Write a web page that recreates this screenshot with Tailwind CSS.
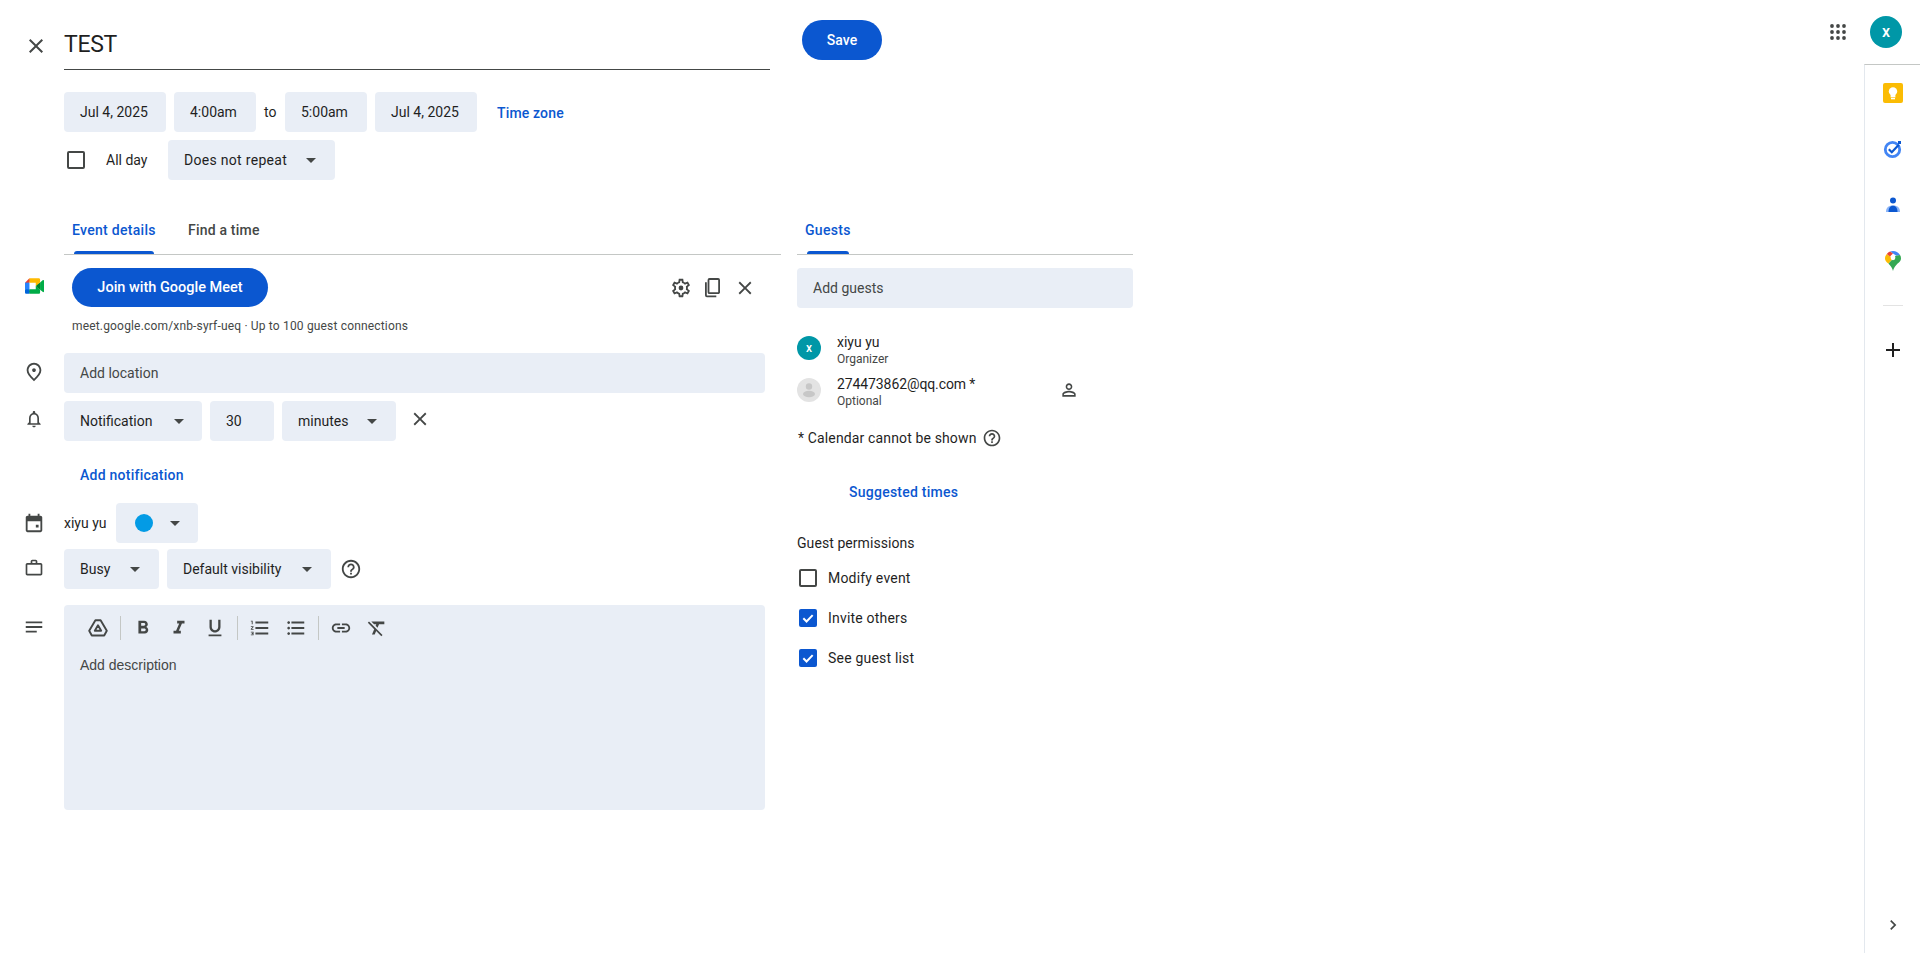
<!DOCTYPE html>
<html lang="en">
	<head>
		<meta charset="UTF-8" />
		<title>TEST - Google Calendar</title>
		<script src="https://cdn.jsdelivr.net/npm/@tailwindcss/browser@4"></script>
	</head>
	<body class="bg-white font-[family-name:Roboto,sans-serif] text-sm text-[#1f1f1f]">
		<div class="flex h-[953px] w-[1920px] overflow-hidden">
			<main class="w-[1808px]">
				<!-- title row -->
				<div class="flex pt-5">
					<div class="flex h-[50px] w-16 items-center justify-start pt-0.5 pl-6">
						<svg class="size-6 text-[#444746]" viewBox="0 0 24 24" fill="currentColor"><path d="M19 6.41L17.59 5 12 10.59 6.41 5 5 6.41 10.59 12 5 17.59 6.41 19 12 13.41 17.59 19 19 17.59 13.41 12z" /></svg>
					</div>
					<div class="flex h-[50px] w-[706px] items-center border-b border-[#444746] pb-px text-[23px] leading-none tracking-[-0.3px]">TEST</div>
					<button class="ml-8 h-10 w-20 rounded-full bg-[#0b57d0] text-sm font-medium text-white">Save</button>
				</div>

				<!-- date row -->
				<div class="mt-[22px] ml-16 flex h-10 items-center gap-2">
					<div class="flex h-10 w-[102px] items-center rounded bg-[#e9eef6] px-4">Jul 4, 2025</div>
					<div class="flex h-10 w-[82px] items-center rounded bg-[#e9eef6] px-4">4:00am</div>
					<span class="w-[13px]">to</span>
					<div class="flex h-10 w-[82px] items-center rounded bg-[#e9eef6] px-4">5:00am</div>
					<div class="flex h-10 w-[102px] items-center rounded bg-[#e9eef6] px-4">Jul 4, 2025</div>
					<a class="ml-3 pt-0.5 font-medium tracking-[0.15px] text-[#0b57d0]">Time zone</a>
				</div>
				<div class="mt-2 ml-16 flex h-10 items-center">
					<span class="ml-[3px] size-[18px] rounded-[2px] border-2 border-[#444746]"></span>
					<span class="ml-[21px] w-[62px]">All day</span>
					<div class="flex h-10 w-[167px] items-center justify-between rounded bg-[#e9eef6] pr-[19px] pl-4 tracking-[0.3px]">
						Does not repeat
						<span class="h-0 w-0 border-x-[5px] border-t-[5px] border-x-transparent border-t-[#444746]"></span>
					</div>
				</div>

				<div class="mt-[26px] flex">
					<!-- event details column -->
					<section class="w-[781px]">
						<div class="ml-16 flex h-[49px] border-b border-[#c4c7c5]">
							<div class="relative ml-2 w-[116px] pt-[14px] font-medium tracking-[0.3px] text-[#0b57d0]">
								Event details
								<span class="absolute bottom-0 left-[2px] h-[3px] w-20 rounded-t-[3px] bg-[#0b57d0]"></span>
							</div>
							<div class="pt-[14px] font-medium tracking-[0.2px] text-[#444746]">Find a time</div>
						</div>

						<div class="mt-[13px] flex h-[77px]">
							<div class="w-16 pt-[10px] pl-[25px]">
								<svg class="h-4 w-[19px]" viewBox="0 0 87.5 72">
									<path fill="#00832d" d="M49.5 36l8.53 9.75 11.47 7.33 2-17.02-2-16.64-11.69 6.44z" />
									<path fill="#0066da" d="M0 51.5V66c0 3.315 2.685 6 6 6h14.5l3-10.96-3-9.54-9.95-3z" />
									<path fill="#e94235" d="M20.5 0L0 20.5l10.55 3 9.95-3 2.95-9.41z" />
									<path fill="#2684fc" d="M20.5 20.5H0v31h20.5z" />
									<path fill="#00ac47" d="M82.6 8.68L69.5 19.42v33.66l13.16 10.79c1.97 1.54 4.85.135 4.85-2.37V11c0-2.535-2.945-3.925-4.91-2.32zM49.5 36v15.5h-29V72h43c3.315 0 6-2.685 6-6V53.08z" />
									<path fill="#ffba00" d="M63.5 0h-43v20.5h29V36l20-16.57V6c0-3.315-2.685-6-6-6z" />
								</svg>
							</div>
							<div class="w-[701px] pl-2">
								<div class="flex items-center">
									<button class="h-[39px] w-[196px] rounded-full bg-[#0b57d0] pt-px text-[14.5px] font-medium text-white">Join with Google Meet</button>
									<svg class="ml-auto size-[22px] text-[#444746]" viewBox="0 0 24 24" fill="currentColor"><path d="M19.43 12.98c.04-.32.07-.64.07-.98 0-.34-.03-.66-.07-.98l2.11-1.65c.19-.15.24-.42.12-.64l-2-3.46c-.09-.16-.26-.25-.44-.25-.06 0-.12.01-.17.03l-2.49 1c-.52-.4-1.08-.73-1.69-.98l-.38-2.65C14.46 2.18 14.25 2 14 2h-4c-.25 0-.46.18-.49.42l-.38 2.65c-.61.25-1.17.59-1.69.98l-2.49-1c-.06-.02-.12-.03-.18-.03-.17 0-.34.09-.43.25l-2 3.46c-.13.22-.07.49.12.64l2.11 1.65c-.04.32-.07.65-.07.98 0 .33.03.66.07.98l-2.11 1.65c-.19.15-.24.42-.12.64l2 3.46c.09.16.26.25.44.25.06 0 .12-.01.17-.03l2.49-1c.52.4 1.08.73 1.69.98l.38 2.65c.03.24.24.42.49.42h4c.25 0 .46-.18.49-.42l.38-2.65c.61-.25 1.17-.59 1.69-.98l2.49 1c.06.02.12.03.18.03.17 0 .34-.09.43-.25l2-3.46c.12-.22.07-.49-.12-.64l-2.11-1.65zm-1.98-1.71c.04.31.05.52.05.73 0 .21-.02.43-.05.73l-.14 1.13.89.7 1.08.84-.7 1.21-1.27-.51-1.04-.42-.9.68c-.43.32-.84.56-1.25.73l-1.06.43-.16 1.13-.2 1.35h-1.4l-.19-1.35-.16-1.13-1.06-.43c-.43-.18-.83-.41-1.23-.71l-.91-.7-1.06.43-1.27.51-.7-1.21 1.08-.84.89-.7-.14-1.13c-.03-.31-.05-.54-.05-.74s.02-.43.05-.73l.14-1.13-.89-.7-1.08-.84.7-1.21 1.27.51 1.04.42.9-.68c.43-.32.84-.56 1.25-.73l1.06-.43.16-1.13.2-1.35h1.39l.19 1.35.16 1.13 1.06.43c.43.18.83.41 1.23.71l.91.7 1.06-.43 1.27-.51.7 1.21-1.07.85-.89.7.14 1.13z" /><circle cx="12" cy="12" r="2.6" /></svg>
									<svg class="ml-[10px] size-[22px] text-[#444746]" viewBox="0 0 22 22" fill="none" stroke="currentColor" stroke-width="1.8"><path d="M7.5 2h8.6a1 1 0 0 1 1 1v12.2a1 1 0 0 1-1 1H7.5a1 1 0 0 1-1-1V3a1 1 0 0 1 1-1z" /><path d="M3.9 5.2v13.1a1 1 0 0 0 1 1h9.4" /></svg>
									<svg class="mr-[9px] ml-[10px] size-[22px] text-[#444746]" viewBox="0 0 24 24" fill="currentColor"><path d="M19 6.41L17.59 5 12 10.59 6.41 5 5 6.41 10.59 12 5 17.59 6.41 19 12 13.41 17.59 19 19 17.59 13.41 12z" /></svg>
								</div>
								<p class="mt-[11px] text-xs leading-4 tracking-[0.17px] text-[#444746]">meet.google.com/xnb-syrf-ueq · Up to 100 guest connections</p>
							</div>
						</div>

						<div class="mt-2 flex h-10 items-center">
							<div class="flex w-16 pb-0.5 pl-[23px]">
								<svg class="size-[22px] text-[#444746]" viewBox="0 0 24 24" fill="currentColor"><path d="M12 12c-1.1 0-2-.9-2-2s.9-2 2-2 2 .9 2 2-.9 2-2 2zm6-1.8C18 6.57 15.35 4 12 4s-6 2.57-6 6.2c0 2.34 1.95 5.44 6 9.14 4.05-3.7 6-6.8 6-9.14zM12 2c4.2 0 8 3.22 8 8.2 0 3.32-2.67 7.25-8 11.8-5.33-4.55-8-8.48-8-11.8C4 5.22 7.8 2 12 2z" /></svg>
							</div>
							<div class="flex h-10 w-[701px] items-center rounded bg-[#e9eef6] px-4 text-[#444746]">Add location</div>
						</div>

						<div class="mt-2 flex h-10 items-center">
							<div class="flex w-16 pb-1 pl-6">
								<svg class="size-5 text-[#444746]" viewBox="0 0 24 24" fill="currentColor"><path d="M12 22c1.1 0 2-.9 2-2h-4c0 1.1.9 2 2 2zm6-6v-5c0-3.07-1.63-5.64-4.5-6.32V4c0-.83-.67-1.5-1.5-1.5s-1.5.67-1.5 1.5v.68C7.64 5.36 6 7.92 6 11v5l-2 2v1h16v-1l-2-2zm-2 1H8v-6c0-2.48 1.51-4.5 4-4.5s4 2.02 4 4.5v6z" /></svg>
							</div>
							<div class="flex h-10 w-[138px] items-center justify-between rounded bg-[#e9eef6] pr-[18px] pl-4">
								Notification
								<span class="h-0 w-0 border-x-[5px] border-t-[5px] border-x-transparent border-t-[#444746]"></span>
							</div>
							<div class="ml-2 flex h-10 w-16 items-center rounded bg-[#e9eef6] px-4">30</div>
							<div class="ml-2 flex h-10 w-[114px] items-center justify-between rounded bg-[#e9eef6] pr-[19px] pl-4">
								minutes
								<span class="h-0 w-0 border-x-[5px] border-t-[5px] border-x-transparent border-t-[#444746]"></span>
							</div>
							<svg class="mb-1 ml-[13px] size-[22px] text-[#444746]" viewBox="0 0 24 24" fill="currentColor"><path d="M19 6.41L17.59 5 12 10.59 6.41 5 5 6.41 10.59 12 5 17.59 6.41 19 12 13.41 17.59 19 19 17.59 13.41 12z" /></svg>
						</div>

						<div class="flex h-[62px] items-center pt-1.5 pl-20 font-medium tracking-[0.25px] text-[#0b57d0]">Add notification</div>

						<div class="flex h-10 items-center">
							<div class="flex w-16 pl-[23px]">
								<svg class="size-[22px] text-[#444746]" viewBox="0 0 24 24" fill="currentColor"><path d="M19 4h-1V2h-2v2H8V2H6v2H5c-1.11 0-2 .9-2 2v14c0 1.1.89 2 2 2h14c1.1 0 2-.9 2-2V6c0-1.1-.9-2-2-2zm0 16H5V10h14v10zm-2-6h-3v3h3v-3z" /></svg>
							</div>
							<span class="w-[52px]">xiyu yu</span>
							<div class="flex h-10 w-[82px] items-center rounded bg-[#e9eef6] pl-[19px]">
								<span class="size-[18px] rounded-full bg-[#039be5]"></span>
								<span class="ml-[17px] h-0 w-0 border-x-[5px] border-t-[5px] border-x-transparent border-t-[#444746]"></span>
							</div>
						</div>

						<div class="mt-1.5 flex h-10 items-center">
							<div class="flex w-16 pb-0.5 pl-6">
								<svg class="size-5 text-[#444746]" viewBox="0 0 24 24" fill="currentColor"><path d="M14 6V4h-4v2h4zM4 8v11h16V8H4zm16-2c1.11 0 2 .89 2 2v11c0 1.11-.89 2-2 2H4c-1.11 0-2-.89-2-2l.01-11c0-1.11.88-2 1.99-2h4V4c0-1.11.89-2 2-2h4c1.11 0 2 .89 2 2v2h4z" /></svg>
							</div>
							<div class="flex h-10 w-[95px] items-center justify-between rounded bg-[#e9eef6] pr-[19px] pl-4">
								Busy
								<span class="h-0 w-0 border-x-[5px] border-t-[5px] border-x-transparent border-t-[#444746]"></span>
							</div>
							<div class="ml-2 flex h-10 w-[164px] items-center justify-between rounded bg-[#e9eef6] pr-[19px] pl-4">
								Default visibility
								<span class="h-0 w-0 border-x-[5px] border-t-[5px] border-x-transparent border-t-[#444746]"></span>
							</div>
							<svg class="ml-[9px] size-[22px] text-[#444746]" viewBox="0 0 24 24" fill="currentColor"><path d="M11 18h2v-2h-2v2zm1-16C6.48 2 2 6.48 2 12s4.48 10 10 10 10-4.48 10-10S17.52 2 12 2zm0 18c-4.41 0-8-3.59-8-8s3.59-8 8-8 8 3.59 8 8-3.59 8-8 8zm0-14c-2.21 0-4 1.79-4 4h2c0-1.1.9-2 2-2s2 .9 2 2c0 2-3 1.75-3 5h2c0-2.25 3-2.5 3-5 0-2.21-1.79-4-4-4z" /></svg>
						</div>

						<div class="mt-4 flex">
							<div class="w-16 pt-[11px] pl-[23px]">
								<svg class="size-[22px] text-[#444746]" viewBox="0 0 24 24" fill="currentColor"><path d="M3 18h12v-2H3v2zM3 6v2h18V6H3zm0 7h18v-2H3v2z" /></svg>
							</div>
							<div class="h-[205px] w-[701px] rounded bg-[#e9eef6]">
								<div class="flex h-[46px] items-center pl-[23px] text-[#444746]">
									<svg class="size-[22px]" viewBox="0 0 22 22" fill="none" stroke="currentColor" stroke-width="1.9" stroke-linejoin="round"><path d="M8.4 3.2h5.2l6.2 10.6-2.6 4.7H4.8l-2.6-4.7z" /><path d="M11 8.2l3.2 5.6H7.8z" /></svg>
									<span class="ml-[11px] h-6 w-px bg-[#c4c7c5]"></span>
									<svg class="ml-[11px] size-[22px]" viewBox="0 0 24 24" fill="currentColor"><path d="M15.6 10.79c.97-.67 1.65-1.77 1.65-2.79 0-2.26-1.75-4-4-4H7v14h7.04c2.09 0 3.71-1.7 3.71-3.79 0-1.52-.86-2.82-2.15-3.42zM10 6.5h3c.83 0 1.5.67 1.5 1.5s-.67 1.5-1.5 1.5h-3v-3zm3.5 9H10v-3h3.5c.83 0 1.5.67 1.5 1.5s-.67 1.5-1.5 1.5z" /></svg>
									<svg class="ml-[14px] size-[22px]" viewBox="0 0 24 24" fill="currentColor"><path d="M10 4v3h2.21l-3.42 8H6v3h8v-3h-2.21l3.42-8H18V4z" /></svg>
									<svg class="ml-[14px] size-[22px]" viewBox="0 0 24 24" fill="currentColor"><path d="M12 17c3.31 0 6-2.69 6-6V3h-2.5v8c0 1.93-1.57 3.5-3.5 3.5S8.5 12.93 8.5 11V3H6v8c0 3.31 2.69 6 6 6zm-7 2v2h14v-2H5z" /></svg>
									<span class="ml-[11px] h-6 w-px bg-[#c4c7c5]"></span>
									<svg class="ml-[11px] size-[22px]" viewBox="0 0 24 24" fill="currentColor"><path d="M2 17h2v.5H3v1h1v.5H2v1h3v-4H2v1zm1-9h1V4H2v1h1v3zm-1 3h1.8L2 13.1v.9h3v-1H3.2L5 10.9V10H2v1zm5-6v2h14V5H7zm0 14h14v-2H7v2zm0-6h14v-2H7v2z" /></svg>
									<svg class="ml-[14px] size-[22px]" viewBox="0 0 24 24" fill="currentColor"><path d="M4 10.5c-.83 0-1.5.67-1.5 1.5s.67 1.5 1.5 1.5 1.5-.67 1.5-1.5-.67-1.5-1.5-1.5zm0-6c-.83 0-1.5.67-1.5 1.5S3.17 7.5 4 7.5 5.5 6.83 5.5 6 4.83 4.5 4 4.5zm0 12c-.83 0-1.5.68-1.5 1.5s.68 1.5 1.5 1.5 1.5-.68 1.5-1.5-.67-1.5-1.5-1.5zM7 19h14v-2H7v2zm0-6h14v-2H7v2zm0-8v2h14V5H7z" /></svg>
									<span class="ml-[11px] h-6 w-px bg-[#c4c7c5]"></span>
									<svg class="ml-[11px] size-[22px]" viewBox="0 0 24 24" fill="currentColor"><path d="M3.9 12c0-1.71 1.39-3.1 3.1-3.1h4V7H7c-2.76 0-5 2.24-5 5s2.24 5 5 5h4v-1.9H7c-1.71 0-3.1-1.39-3.1-3.1zM8 13h8v-2H8v2zm9-6h-4v1.9h4c1.71 0 3.1 1.39 3.1 3.1s-1.39 3.1-3.1 3.1h-4V17h4c2.76 0 5-2.24 5-5s-2.24-5-5-5z" /></svg>
									<svg class="ml-[14px] size-[22px]" viewBox="0 0 24 24" fill="currentColor"><path d="M3.27 5L2 6.27l6.97 6.97L6.5 19h3l1.57-3.66L16.73 21 18 19.73 3.55 5.27 3.27 5zM6 5v.18L8.82 8h2.4l-.72 1.68 2.1 2.1L14.21 8H20V5H6z" /></svg>
								</div>
								<p class="mt-1 pl-4 font-[family-name:'Liberation_Sans',sans-serif] leading-5 text-[#444746]">Add description</p>
							</div>
						</div>
					</section>

					<!-- guests column -->
					<section class="ml-4 w-[336px]">
						<div class="flex h-[49px] border-b border-[#c4c7c5]">
							<div class="relative ml-2 pt-[14px] font-medium tracking-[0.3px] text-[#0b57d0]">
								Guests
								<span class="absolute bottom-0 left-[2px] h-[3px] w-[42px] rounded-t-[3px] bg-[#0b57d0]"></span>
							</div>
						</div>
						<div class="mt-[13px] flex h-10 items-center rounded bg-[#e9eef6] px-4 text-[#444746]">Add guests</div>

						<div class="mt-6 flex h-[42px]">
							<span class="mt-1 flex size-6 items-center justify-center rounded-full bg-[#0097a7] text-xs font-medium text-white">x</span>
							<div class="ml-4">
								<p class="leading-5">xiyu yu</p>
								<p class="-mt-px text-xs leading-4 text-[#444746]">Organizer</p>
							</div>
						</div>
						<div class="flex h-[42px]">
							<span class="mt-1 size-6 overflow-hidden rounded-full bg-[#e3e3e3]">
								<svg class="size-6 text-[#c7c7c7]" viewBox="0 0 24 24" fill="currentColor"><circle cx="12" cy="8.5" r="3.2" /><ellipse cx="12" cy="16" rx="6" ry="3.2" /></svg>
							</span>
							<div class="ml-4">
								<p class="leading-5 tracking-[-0.1px]">274473862@qq.com *</p>
								<p class="-mt-px text-xs leading-4 text-[#444746]">Optional</p>
							</div>
							<svg class="mt-[6px] mr-[54px] ml-auto size-5 text-[#444746]" viewBox="0 0 24 24" fill="currentColor"><path d="M12 5.9c1.16 0 2.1.94 2.1 2.1s-.94 2.1-2.1 2.1S9.9 9.16 9.9 8s.94-2.1 2.1-2.1m0 9c2.97 0 6.1 1.46 6.1 2.1v1.1H5.9V17c0-.64 3.13-2.1 6.1-2.1M12 4C9.79 4 8 5.79 8 8s1.79 4 4 4 4-1.79 4-4-1.79-4-4-4zm0 9c-2.67 0-8 1.34-8 4v3h16v-3c0-2.66-5.33-4-8-4z" /></svg>
						</div>
						<div class="mt-3 flex h-5 items-center pl-px tracking-[0.14px]">
							* Calendar cannot be shown
							<svg class="ml-[5px] size-5 text-[#444746]" viewBox="0 0 24 24" fill="currentColor"><path d="M11 18h2v-2h-2v2zm1-16C6.48 2 2 6.48 2 12s4.48 10 10 10 10-4.48 10-10S17.52 2 12 2zm0 18c-4.41 0-8-3.59-8-8s3.59-8 8-8 8 3.59 8 8-3.59 8-8 8zm0-14c-2.21 0-4 1.79-4 4h2c0-1.1.9-2 2-2s2 .9 2 2c0 2-3 1.75-3 5h2c0-2.25 3-2.5 3-5 0-2.21-1.79-4-4-4z" /></svg>
						</div>
						<div class="mt-[34px] ml-[52px] h-5 leading-5 font-medium tracking-[0.25px] text-[#0b57d0]">Suggested times</div>
						<p class="mt-[31px] h-5 leading-5 tracking-[0.07px]">Guest permissions</p>
						<div class="mt-[5px] flex h-10 items-center pl-[2px]">
							<span class="size-[18px] rounded-[2px] border-2 border-[#444746]"></span>
							<span class="ml-[11px] tracking-[0.2px]">Modify event</span>
						</div>
						<div class="flex h-10 items-center pl-[2px]">
							<span class="flex size-[18px] items-center justify-center rounded-[2px] bg-[#0b57d0]">
								<svg class="size-[14px] text-white" viewBox="0 0 24 24" fill="none" stroke="currentColor" stroke-width="3.4"><path d="M4 12.5l5.5 5.5L20 7" /></svg>
							</span>
							<span class="ml-[11px] tracking-[0.2px]">Invite others</span>
						</div>
						<div class="flex h-10 items-center pl-[2px]">
							<span class="flex size-[18px] items-center justify-center rounded-[2px] bg-[#0b57d0]">
								<svg class="size-[14px] text-white" viewBox="0 0 24 24" fill="none" stroke="currentColor" stroke-width="3.4"><path d="M4 12.5l5.5 5.5L20 7" /></svg>
							</span>
							<span class="ml-[11px] tracking-[0.2px]">See guest list</span>
						</div>
					</section>
				</div>
			</main>

			<!-- account + side panel -->
			<aside class="flex w-[112px] flex-col">
				<div class="flex h-16 items-center pl-[21px]">
					<svg class="size-[18px] text-[#444746]" viewBox="0 0 18 18" fill="currentColor">
						<circle cx="3" cy="3" r="1.9" /><circle cx="9" cy="3" r="1.9" /><circle cx="15" cy="3" r="1.9" />
						<circle cx="3" cy="9" r="1.9" /><circle cx="9" cy="9" r="1.9" /><circle cx="15" cy="9" r="1.9" />
						<circle cx="3" cy="15" r="1.9" /><circle cx="9" cy="15" r="1.9" /><circle cx="15" cy="15" r="1.9" />
					</svg>
					<span class="ml-[23px] flex size-8 items-center justify-center rounded-full bg-[#0097a7] text-base font-medium text-white">x</span>
				</div>
				<div class="ml-14 flex flex-1 flex-col items-center border-t border-l border-t-[#c4c7c5] border-l-[#e3e8ee]">
					<div class="flex h-14 items-center justify-center">
						<svg class="size-5" viewBox="0 0 20 20"><rect width="20" height="20" rx="2" fill="#fbbc04" /><circle cx="10" cy="8.4" r="4.2" fill="#fff" /><rect x="7.6" y="12" width="4.8" height="2.4" fill="#fff" /><rect x="8" y="15" width="4" height="1.3" fill="#fff" /></svg>
					</div>
					<div class="flex h-14 items-center justify-center">
						<svg class="size-5" viewBox="0 0 20 20" fill="none"><circle cx="9.5" cy="10.5" r="7.2" stroke="#4285f4" stroke-width="2.8" /><path d="M5.800 10.200l3 3 7-7.400" stroke="#0b57d0" stroke-width="2.200" /><rect x="15" y="2" width="3" height="3" fill="#0b57d0" /></svg>
					</div>
					<div class="flex h-14 items-center justify-center">
						<svg class="size-5" viewBox="0 0 20 20"><path d="M3 17c0-4 2-6.500 7-6.500s7 2.500 7 6.500z" fill="#8ab4f8" /><path d="M5.500 17c0-3.500 1.500-6.200 4.500-6.200s4.500 2.700 4.500 6.200z" fill="#0b57d0" /><circle cx="10" cy="5.600" r="3" fill="#0b57d0" /></svg>
					</div>
					<div class="flex h-14 items-center justify-center">
						<svg class="h-[20px] w-[16px]" viewBox="0 0 16 20">
							<path d="M8 20c-.5-3-2.500-5-4.600-7.500L11 4.500 15 4c.7 1 1 2.200 1 3.400 0 2-1.400 3.600-3.400 5.100C10.500 15 8.500 17 8 20z" fill="#34a853" />
							<path d="M1.800 3C.7 4.200 0 5.600 0 7.400c0 2 1.400 3.600 3.400 5.100L8 7.500 1.800 3z" fill="#fbbc04" />
							<path d="M5 .6C6 .2 7 0 8 0c2.800 0 5.400 1.500 7 4l-4 .5-3-2.100z" fill="#4285f4" />
							<path d="M1.800 3L5 5.400 8 2.400 5 .6C3.700 1.100 2.600 2 1.800 3z" fill="#ea4335" />
							<circle cx="8" cy="6.800" r="2.400" fill="#fff" />
						</svg>
					</div>
					<span class="mt-4 h-px w-5 bg-[#e3e3e3]"></span>
					<div class="mt-4 flex h-14 items-center justify-center">
						<svg class="size-6 text-[#1f1f1f]" viewBox="0 0 24 24" fill="currentColor"><path d="M19 13h-6v6h-2v-6H5v-2h6V5h2v6h6v2z" /></svg>
					</div>
					<div class="mt-auto flex h-14 items-center justify-center">
						<svg class="size-5 text-[#444746]" viewBox="0 0 24 24" fill="currentColor"><path d="M10 6L8.590 7.410 13.170 12l-4.580 4.590L10 18l6-6z" /></svg>
					</div>
				</div>
			</aside>
		</div>
	</body>
</html>
